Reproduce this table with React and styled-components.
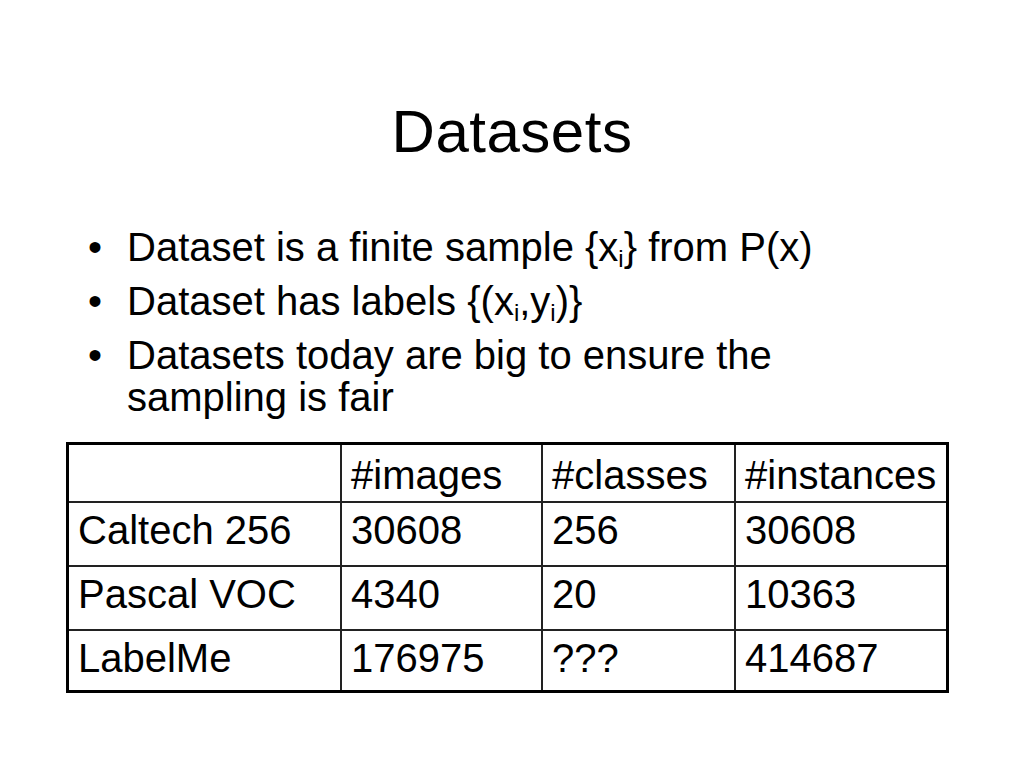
import React from 'react';
import styled, { createGlobalStyle } from 'styled-components';

const GlobalStyle = createGlobalStyle`
  html, body {
    margin: 0;
    padding: 0;
    background: #ffffff;
  }
  body {
    font-family: "Liberation Sans", Arial, Helvetica, sans-serif;
    color: #000000;
  }
`

const Slide = styled.div`
  width: 1024px;
  height: 768px;
  box-sizing: border-box;
  padding-top: 102px;
  background: #ffffff;
  display: flex;
  flex-direction: column;
`

const Title = styled.h1`
  margin: 0;
  font-weight: 400;
  font-size: 60px;
  line-height: 60px;
  letter-spacing: 0.5px;
  text-align: center;
`

const Bullets = styled.ul`
  list-style: none;
  margin: 64px 0 0 0;
  padding: 0 0 0 88px;
  font-size: 40px;
  line-height: 42px;
`

const Item = styled.li`
  display: flex;
  margin-top: ${p => (p.first ? '0' : '12px')};
`

const Dot = styled.span`
  flex: 0 0 39px;
`

const Text = styled.span`
  flex: 1;
  max-width: 700px;
`

const Sub = styled.span`
  font-size: 0.6em;
  vertical-align: -0.25em;
  line-height: 0;
`

const Table = styled.table`
  margin: 24px 0 0 66px;
  width: 883px;
  border: 3px solid #000000;
  border-collapse: separate;
  border-spacing: 0;
  table-layout: fixed;
  font-size: 40px;
  line-height: 42px;
`

const Row = styled.tr`
  height: ${p => p.h}px;
`

const Cell = styled.td`
  padding: ${p => p.pt}px 0 0 9px;
  vertical-align: top;
  white-space: nowrap;
  border-right: ${p => (p.lastCol ? 'none' : '2px solid #222222')};
  border-bottom: ${p => (p.lastRow ? 'none' : '2px solid #222222')};
  box-sizing: border-box;
`

const widths = [273, 201, 193, 210]

const rows = [
  { h: 58, pt: 9, cells: ['', '#images', '#classes', '#instances'] },
  { h: 64, pt: 6, cells: ['Caltech 256', '30608', '256', '30608'] },
  { h: 64, pt: 6, cells: ['Pascal VOC', '4340', '20', '10363'] },
  { h: 59, pt: 6, cells: ['LabelMe', '176975', '???', '414687'] },
]

const App = () => {
  return (
    <>
      <GlobalStyle />
      <Slide>
        <Title>Datasets</Title>
        <Bullets>
          <Item first>
            <Dot>•</Dot>
            <Text>Dataset is a finite sample {'{'}x<Sub>i</Sub>{'}'} from P(x)</Text>
          </Item>
          <Item>
            <Dot>•</Dot>
            <Text>Dataset has labels {'{'}(x<Sub>i</Sub>,y<Sub>i</Sub>){'}'}</Text>
          </Item>
          <Item>
            <Dot>•</Dot>
            <Text>Datasets today are big to ensure the sampling is fair</Text>
          </Item>
        </Bullets>
        <Table>
          <colgroup>
            {widths.map((w, i) => <col key={i} style={{ width: w }} />)}
          </colgroup>
          <tbody>
            {rows.map((r, ri) => (
              <Row key={ri} h={r.h}>
                {r.cells.map((c, ci) => (
                  <Cell
                    key={ci}
                    pt={r.pt}
                    lastCol={ci === r.cells.length - 1}
                    lastRow={ri === rows.length - 1}
                  >
                    {c}
                  </Cell>
                ))}
              </Row>
            ))}
          </tbody>
        </Table>
      </Slide>
    </>
  )
}

export default App;
